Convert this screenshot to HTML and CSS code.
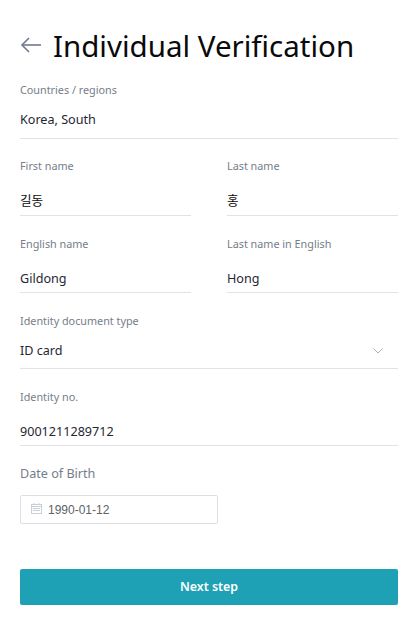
FILE: index.html
```html
<!DOCTYPE html>
<html lang="en">
<head>
    <meta charset="UTF-8">
    <meta name="viewport" content="width=device-width, initial-scale=1.0">
    <title>Individual Verification</title>
    <link rel="stylesheet" href="styles.css">
</head>
<body>
    <div class="page">
        <div class="header">
            <svg class="back" width="22" height="16" viewBox="0 0 22 16" fill="none" stroke="#6f7a8a" stroke-width="1.6">
                <path d="M21 8H2"/>
                <path d="M9 1L2 8l7 7"/>
            </svg>
            <h1>Individual Verification</h1>
        </div>

        <div class="field country">
            <div class="label">Countries / regions</div>
            <div class="value fixed">Korea, South</div>
        </div>

        <div class="row">
            <div class="field">
                <div class="label">First name</div>
                <div class="value ko">길동</div>
            </div>
            <div class="field">
                <div class="label">Last name</div>
                <div class="value ko">홍</div>
            </div>
        </div>

        <div class="row">
            <div class="field">
                <div class="label">English name</div>
                <div class="value">Gildong</div>
            </div>
            <div class="field">
                <div class="label">Last name in English</div>
                <div class="value">Hong</div>
            </div>
        </div>

        <div class="field">
            <div class="label">Identity document type</div>
            <div class="value select">
                <span>ID card</span>
                <svg class="chevron" width="10" height="6" viewBox="0 0 10 6" fill="none" stroke="#a3b4c6" stroke-width="1">
                    <path d="M.5.5L5 5 9.5.5"/>
                </svg>
            </div>
        </div>

        <div class="field">
            <div class="label">Identity no.</div>
            <div class="value">9001211289712</div>
        </div>

        <div class="date-label">Date of Birth</div>
        <div class="date-input">
            <svg class="calendar" width="11" height="11" viewBox="0 0 11 11" fill="none" stroke="#c9d0d9" stroke-width="1">
                <rect x=".5" y="1.5" width="10" height="9"/>
                <path d="M.5 3.5h10M3 0v2M8 0v2M2 5.5h7M2 7.5h7"/>
            </svg>
            <span>1990-01-12</span>
        </div>

        <button class="next">Next step</button>
    </div>
</body>
</html>
```

FILE: styles.css
```css
body {
    font-family: "Noto Sans", sans-serif;
    background-color: #fff;
    margin: 0;
    padding: 0;
}

.page {
    width: 378px;
    padding: 25px 11px 0 20px;
}

.header {
    display: flex;
    align-items: center;
    height: 42px;
    margin-bottom: 15px;
}

.back {
    margin-right: 11px;
    margin-bottom: 2px;
}

h1 {
    margin: 0;
    font-size: 29.5px;
    font-weight: 400;
    line-height: 42px;
    color: #0a0a0a;
}

.row {
    display: flex;
    gap: 36px;
}

.row .field {
    flex: 1;
}

.field {
    margin-bottom: 20px;
    border-bottom: 1px solid #e0e2e6;
}

.country {
    margin-bottom: 19px;
}

.label {
    font-size: 10.8px;
    line-height: 16px;
    color: #757d8a;
}

.value {
    margin-top: 18px;
    font-size: 12.6px;
    line-height: 18px;
    padding-bottom: 4px;
    color: #1f2733;
}

.fixed {
    margin-top: 13px;
    padding-bottom: 9px;
}

.ko {
    padding-bottom: 5px;
    font-family: "Noto Sans", "Noto Sans CJK KR", sans-serif;
    color: #0a0a0a;
}

.select {
    display: flex;
    justify-content: space-between;
    align-items: center;
    margin-top: 13px;
    padding-bottom: 8px;
}

.chevron {
    margin-right: 15px;
}

.date-label {
    margin-top: -1px;
    margin-bottom: 12px;
    font-size: 12.6px;
    line-height: 18px;
    color: #757d8a;
}

.date-input {
    display: flex;
    align-items: center;
    gap: 6px;
    box-sizing: border-box;
    width: 198px;
    height: 29px;
    padding-left: 10px;
    border: 1px solid #dcdfe6;
    border-radius: 2px;
    font-family: "Liberation Sans", Arial, sans-serif;
    font-size: 12px;
    color: #606266;
}

.calendar {
    margin-bottom: 2px;
}

.next {
    display: block;
    width: 100%;
    height: 36px;
    margin-top: 45px;
    padding: 0 0 2px;
    border: none;
    border-radius: 2px;
    background-color: #1ea1b5;
    color: #fff;
    font-family: "Noto Sans", sans-serif;
    font-size: 12.4px;
    font-weight: 600;
    cursor: pointer;
}
```
